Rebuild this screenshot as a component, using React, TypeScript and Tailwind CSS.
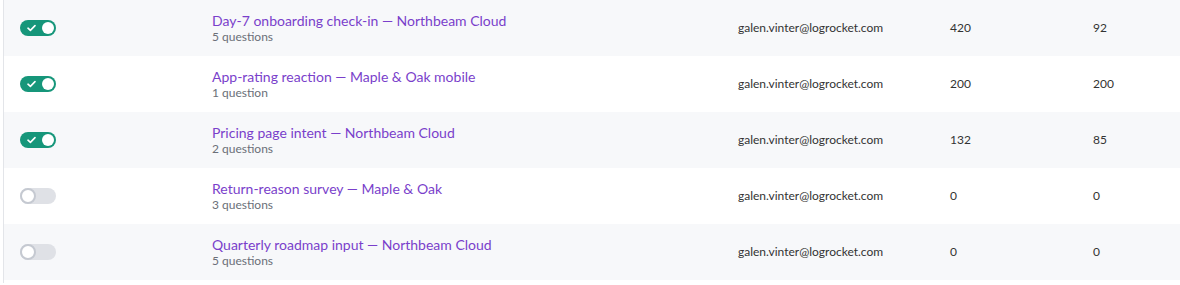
import React from "react";

type Row = { on: boolean; title: string; q: string; email: string; a: string; b: string };

const rows: Row[] = [
  { on: true, title: "Day-7 onboarding check-in — Northbeam Cloud", q: "5 questions", email: "galen.vinter@logrocket.com", a: "420", b: "92" },
  { on: true, title: "App-rating reaction — Maple & Oak mobile", q: "1 question", email: "galen.vinter@logrocket.com", a: "200", b: "200" },
  { on: true, title: "Pricing page intent — Northbeam Cloud", q: "2 questions", email: "galen.vinter@logrocket.com", a: "132", b: "85" },
  { on: false, title: "Return-reason survey — Maple & Oak", q: "3 questions", email: "galen.vinter@logrocket.com", a: "0", b: "0" },
  { on: false, title: "Quarterly roadmap input — Northbeam Cloud", q: "5 questions", email: "galen.vinter@logrocket.com", a: "0", b: "0" },
];

function Toggle({ on }: { on: boolean }) {
  if (on) {
    return (
      <div className="relative flex h-[16px] w-[36px] items-center rounded-full bg-[#16967a]">
        <svg className="absolute left-[7px] top-[4px]" width="9" height="8" viewBox="0 0 9 8" fill="none">
          <path d="M1 4.2 L3.4 6.4 L8 1.6" stroke="white" strokeWidth="1.6" strokeLinecap="round" strokeLinejoin="round" />
        </svg>
        <div className="absolute right-[2px] top-[2px] h-[12px] w-[12px] rounded-full bg-white" />
      </div>
    );
  }
  return (
    <div className="relative h-[16px] w-[36px] rounded-full bg-[#dfe1e6]">
      <div className="absolute left-0 top-0 h-[16px] w-[16px] rounded-full border-2 border-[#c5c9d1] bg-white" />
    </div>
  );
}

export default function App() {
  return (
    <div className="h-[285px] w-full bg-white" style={{ fontFamily: "Lato, 'Open Sans', sans-serif" }}>
      <div className="ml-[3px] h-[283px] border-l border-[#e3e5e9]">
        {rows.map((r, i) => (
          <div
            key={i}
            className={`grid h-[56px] grid-cols-[208px_526px_212px_143px_1fr] items-center ${i % 2 === 0 ? "bg-[#f7f8fa]" : "bg-white"}`}
          >
            <div className="pl-4">
              <Toggle on={r.on} />
            </div>
            <div className="flex flex-col">
              <span className="text-[14px] leading-[17px] text-[#7a3fcb]">{r.title}</span>
              <span className="text-[12px] leading-[15px] text-[#6b6f78]">{r.q}</span>
            </div>
            <div className="text-[12px] text-[#333333]">{r.email}</div>
            <div className="text-[12px] text-[#333333]">{r.a}</div>
            <div className="text-[12px] text-[#333333]">{r.b}</div>
          </div>
        ))}
      </div>
    </div>
  );
}
